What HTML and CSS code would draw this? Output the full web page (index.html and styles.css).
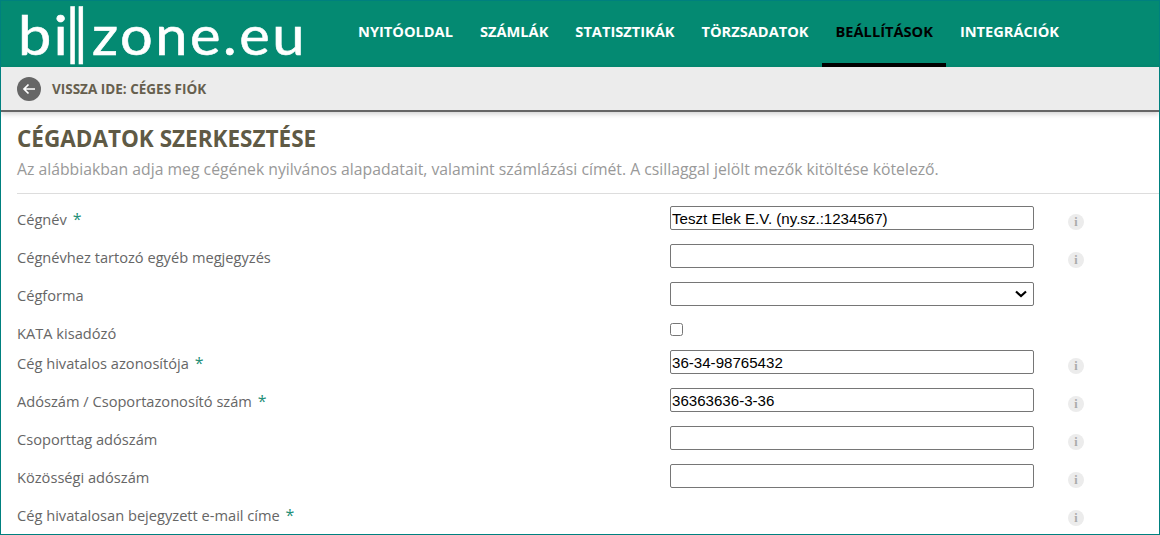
FILE: index.html
```html
<!DOCTYPE html>
<html lang="hu">
<head>
<meta charset="utf-8">
<title>Cégadatok szerkesztése</title>
<link rel="stylesheet" href="styles.css">
</head>
<body>
<div class="app">
  <header class="topbar">
    <a class="logo" href="#"><span class="logo-bi">bi</span><span class="logo-bars">ll</span><span class="logo-rest">zone.eu</span></a>
    <nav class="nav">
      <a href="#">NYITÓOLDAL</a>
      <a href="#">SZÁMLÁK</a>
      <a href="#">STATISZTIKÁK</a>
      <a href="#">TÖRZSADATOK</a>
      <a href="#" class="active">BEÁLLÍTÁSOK</a>
      <a href="#">INTEGRÁCIÓK</a>
    </nav>
  </header>
  <div class="backbar">
    <svg class="back-icon" viewBox="0 0 24 24" width="24" height="24" aria-hidden="true">
      <circle cx="12" cy="12" r="12" fill="#666"/>
      <path d="M18 12H7M11.500 7.500L7 12l4.500 4.500" fill="none" stroke="#fff" stroke-width="1.700"/>
    </svg>
    <span>VISSZA IDE: CÉGES FIÓK</span>
  </div>
  <main class="content">
    <h1>CÉGADATOK SZERKESZTÉSE</h1>
    <p class="lead">Az alábbiakban adja meg cégének nyilvános alapadatait, valamint számlázási címét. A csillaggal jelölt mezők kitöltése kötelező.</p>
    <form class="form">
      <div class="row">
        <label>Cégnév <b>*</b></label>
        <input type="text" value="Teszt Elek E.V. (ny.sz.:1234567)">
        <span class="info">i</span>
      </div>
      <div class="row">
        <label>Cégnévhez tartozó egyéb megjegyzés</label>
        <input type="text">
        <span class="info">i</span>
      </div>
      <div class="row">
        <label>Cégforma</label>
        <select><option></option></select>
      </div>
      <div class="row row-check">
        <label>KATA kisadózó</label>
        <input type="checkbox">
      </div>
      <div class="row">
        <label>Cég hivatalos azonosítója <b>*</b></label>
        <input type="text" value="36-34-98765432">
        <span class="info">i</span>
      </div>
      <div class="row">
        <label>Adószám / Csoportazonosító szám <b>*</b></label>
        <input type="text" value="36363636-3-36">
        <span class="info">i</span>
      </div>
      <div class="row">
        <label>Csoporttag adószám</label>
        <input type="text">
        <span class="info">i</span>
      </div>
      <div class="row">
        <label>Közösségi adószám</label>
        <input type="text">
        <span class="info">i</span>
      </div>
      <div class="row">
        <label>Cég hivatalosan bejegyzett e-mail címe <b>*</b></label>
        <span class="spacer"></span>
        <span class="info">i</span>
      </div>
    </form>
  </main>
</div>
</body>
</html>
```

FILE: styles.css
```css
* { box-sizing: border-box; }
html, body { margin: 0; height: 100%; }
body {
  background: #fff;
  font-family: "Open Sans", sans-serif;
  color: #666;
  overflow: hidden;
}
.app {
  height: 535px;
  border: 1px solid #00807f;
  overflow: hidden;
  display: flex;
  flex-direction: column;
}
.topbar {
  flex: none;
  height: 66px;
  background: #048a72;
  display: flex;
  align-items: stretch;
}
.logo {
  width: 321px;
  padding: 0 0 0 17px;
  flex: none;
  color: #fff;
  text-decoration: none;
  font-family: Lato, sans-serif;
  font-weight: 400;
  font-size: 55px;
  line-height: 66px;
  white-space: nowrap;
  -webkit-text-stroke: 0.6px #fff;
}
.logo-bi {
  display: inline-block;
  letter-spacing: 2px;
  transform: scaleX(1.080);
  transform-origin: left center;
}
.logo-bars {
  font-size: 78px;
  font-weight: 300;
  line-height: 50px;
  letter-spacing: -9px;
  vertical-align: -9px;
  margin-left: -2px;
}
.logo-rest {
  display: inline-block;
  letter-spacing: 2.400px;
  margin-left: 12px;
  transform: scaleX(1.050);
  transform-origin: left center;
}
.nav {
  display: flex;
  margin-left: 22.500px;
}
.nav a {
  display: flex;
  align-items: center;
  padding: 0 13.500px 3px;
  color: #fff;
  text-decoration: none;
  font-size: 14.620px;
  font-weight: 700;
  border-bottom: 4px solid transparent;
}
.nav a.active {
  color: #000;
  border-bottom-color: #000;
}
.backbar {
  flex: none;
  height: 45px;
  background: #ececec;
  border-bottom: 2px solid #666;
  box-shadow: 0 2px 5px rgba(0, 0, 0, 0.18);
  display: flex;
  align-items: center;
  gap: 11px;
  padding: 1px 0 0 16px;
  font-size: 13.500px;
  font-weight: 700;
  color: #665f4e;
  position: relative;
}
.content { flex: 1; padding-top: 11px; }
h1 {
  margin: 0;
  padding-left: 16px;
  font-size: 22.500px;
  line-height: 32px;
  font-weight: 700;
  color: #5f5a45;
}
.lead {
  margin: 0;
  padding: 3px 0 13px 16px;
  font-size: 15.760px;
  line-height: 22px;
  color: #999;
}
.form {
  margin-left: 16px;
  border-top: 1px solid #ddd;
  padding-top: 9px;
}
.row {
  height: 38px;
  display: flex;
  align-items: flex-start;
}
.row label {
  width: 653px;
  flex: none;
  font-size: 14.630px;
  line-height: 20px;
  padding-top: 6px;
  color: #666;
}
.row label b {
  color: #1f8f78;
  font-weight: 400;
  font-size: 16px;
  margin-left: 2px;
}
.row input[type="text"], .row select, .spacer {
  width: 364px;
  height: 24px;
  margin: 3px 0 0;
  flex: none;
}
.row input[type="text"], .row select {
  border: 1px solid #767676;
  border-radius: 2px;
  background-color: #fff;
  color: #000;
  font-family: "Liberation Sans", Arial, sans-serif;
  font-size: 15.100px;
  padding: 0 1px;
}
.row select {
  appearance: none;
  background-image: url("data:image/svg+xml,%3Csvg xmlns='http://www.w3.org/2000/svg' width='12' height='8'%3E%3Cpath d='M1 1.500l5 4.500 5-4.500' fill='none' stroke='%23000' stroke-width='2.200'/%3E%3C/svg%3E");
  background-repeat: no-repeat;
  background-position: right 6px center;
}
.row-check { height: 30px; }
.row input[type="checkbox"] {
  width: 13px;
  height: 13px;
  margin: 6px 0 0;
}
.info {
  flex: none;
  width: 16px;
  height: 16px;
  margin: 11px 0 0 34px;
  border-radius: 50%;
  background: #ececec;
  color: #aaa;
  font-family: "Liberation Serif", serif;
  font-size: 12px;
  font-weight: 700;
  line-height: 16px;
  text-align: center;
}
```
